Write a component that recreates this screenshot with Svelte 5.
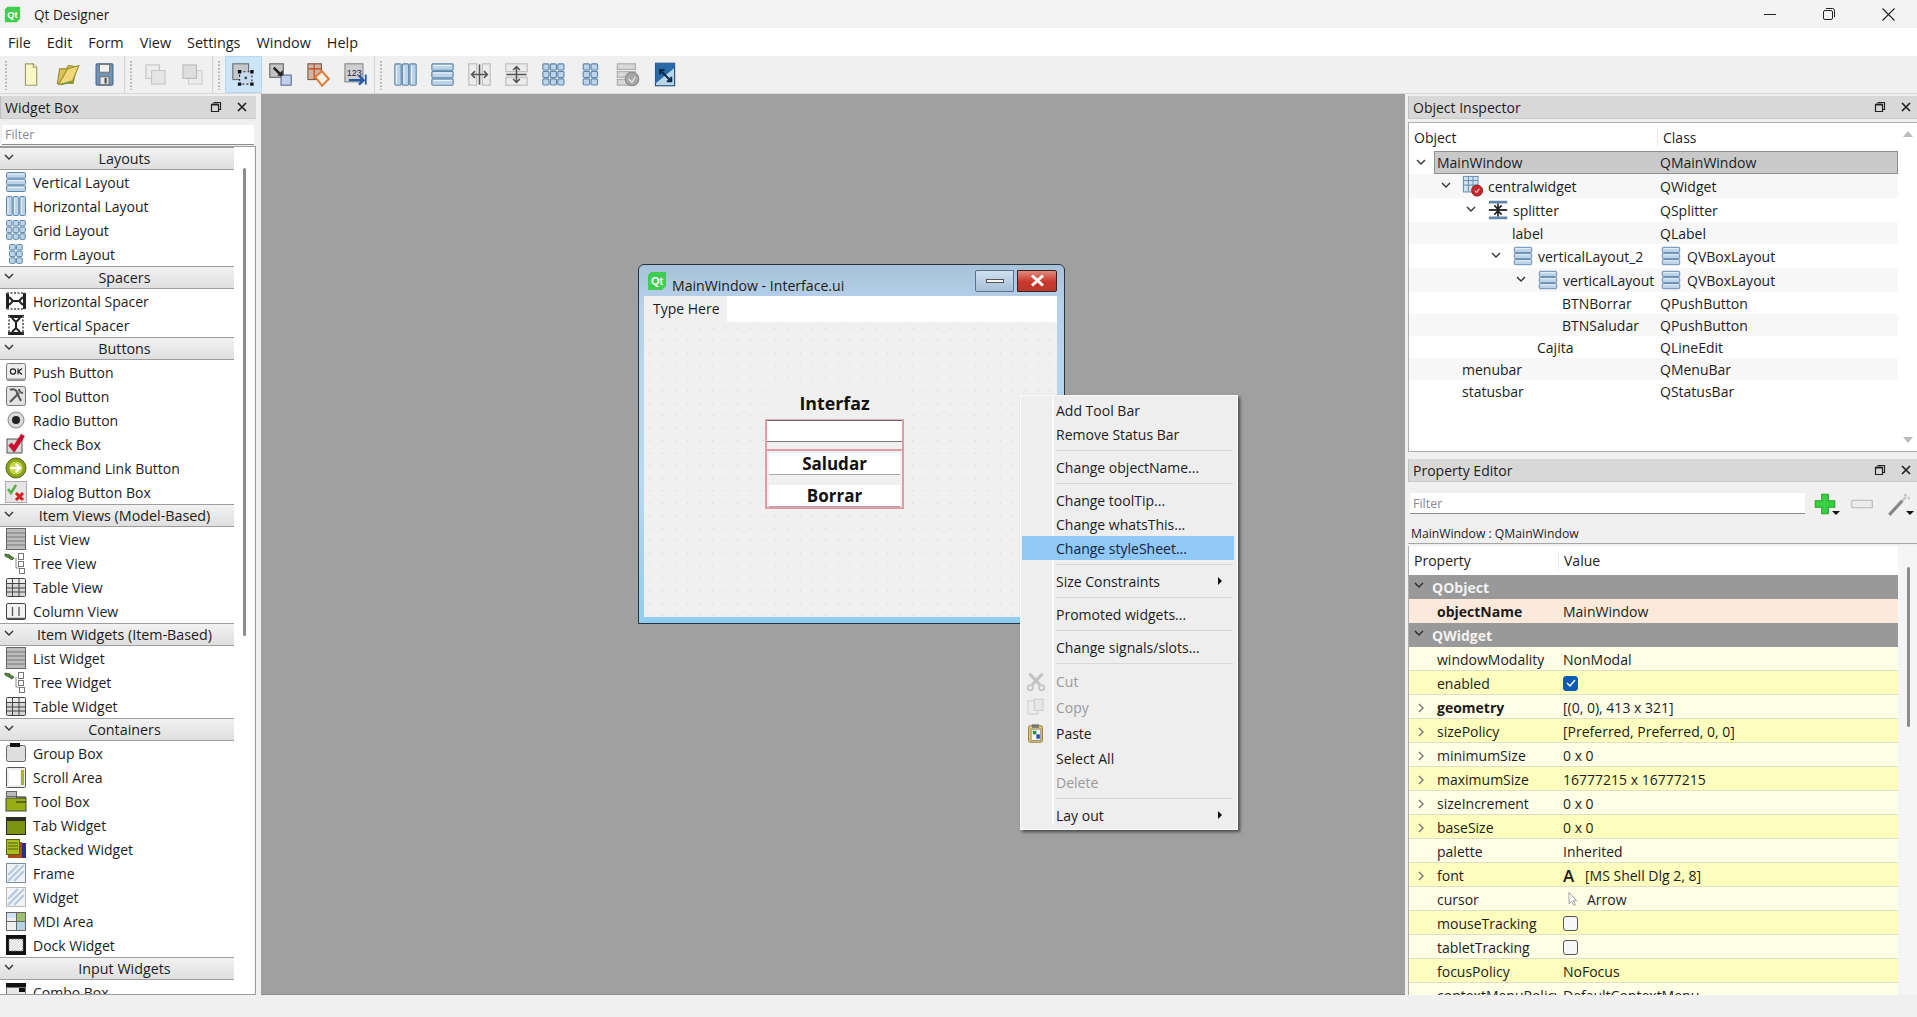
<script>
  const B = '#5f87ab', L = '#bcd3e8', D = '#2f5f8a';
  const cols = (n) => {
    let s = '';
    const w = 20 / n;
    for (let i = 0; i < n; i++) s += `<rect x="${2 + i * w + .5}" y="2.5" width="${w - 1}" height="19" rx="1" fill="${L}" stroke="${B}"/><path d="M${2 + i * w + 2} 4v16" stroke="#eef5fb" stroke-width=".9"/>`;
    return s;
  };
  const rows = (n) => {
    let s = '';
    const h = 20 / n;
    for (let i = 0; i < n; i++) s += `<rect x="2.5" y="${2 + i * h + .5}" width="19" height="${h - 1}" rx="1" fill="${L}" stroke="${B}"/><path d="M4 ${2 + i * h + 2}h16" stroke="#eef5fb" stroke-width=".9"/>`;
    return s;
  };
  const grid = (nx, ny, x0 = 2, w = 20) => {
    let s = '';
    const cw = w / nx, ch = 20 / ny;
    for (let i = 0; i < nx; i++) for (let j = 0; j < ny; j++) s += `<rect x="${x0 + i * cw + .5}" y="${2 + j * ch + .5}" width="${cw - 1.2}" height="${ch - 1.2}" rx="1" fill="${L}" stroke="${B}"/>`;
    return s;
  };
  const hatch = `<path d="M4 20 20 4M4 14 14 4M10 20 20 10" stroke="#b7c9dc" stroke-width="2.4"/>`;
  const icons = {
    vlayout: rows(3),
    hlayout: cols(3),
    glayout: grid(3, 3),
    flayout: grid(2, 3, 5, 14),
    hspacer: `<rect x="2" y="4" width="3" height="16" fill="#222"/><rect x="19" y="4" width="3" height="16" fill="#222"/><path d="M5 8l4 4-4 4M19 8l-4 4 4 4M9 12h6" stroke="#222" stroke-width="2" fill="none"/><path d="M3 4h18M3 20h18" stroke="#777" stroke-dasharray="2 1.5" stroke-width="2"/>`,
    vspacer: `<rect x="4" y="2" width="16" height="3" fill="#222"/><rect x="4" y="19" width="16" height="3" fill="#222"/><path d="M8 5l4 4 4-4M8 19l4-4 4 4M12 9v6" stroke="#222" stroke-width="2" fill="none"/><path d="M5 3v18M19 3v18" stroke="#777" stroke-dasharray="2 1.5" stroke-width="2"/>`,
    push: `<rect x="2.500" y="3.500" width="19" height="17" rx="2" fill="#eee" stroke="#777"/><path d="M3 19.500h18" stroke="#999" stroke-width="2"/><circle cx="9" cy="11.500" r="2.600" fill="none" stroke="#222" stroke-width="1.200"/><path d="M14 8.500v6M18 8.500l-3.600 3 3.600 3" stroke="#222" stroke-width="1.200" fill="none"/>`,
    tool: `<rect x="2.500" y="2.500" width="19" height="19" rx="2" fill="#e2e2e2" stroke="#777"/><path d="M6 18 15 9M15 5a4 4 0 0 0 4 4M6 6c3-2 7 0 7 3l4 8" stroke="#555" stroke-width="2" fill="none"/>`,
    radio: `<circle cx="12" cy="12" r="8" fill="#d9d9d9" stroke="#888"/><circle cx="12" cy="12" r="4" fill="#222"/>`,
    check: `<rect x="3" y="7" width="15" height="14" fill="#d8d8d8" stroke="#555"/><path d="M6 12l4 5 9-14" stroke="#c8102e" stroke-width="4.500" fill="none"/>`,
    cmd: `<circle cx="12" cy="12" r="10" fill="#8aa21f" stroke="#56660f"/><circle cx="12" cy="12" r="6.600" fill="#c8d64a"/><path d="M6.500 12h9M12 8l4 4-4 4" stroke="#fff" stroke-width="2.300" fill="none"/>`,
    dialog: `<rect x="1.500" y="1.500" width="21" height="21" fill="#e5e5e5" stroke="#aaa"/><path d="M4 9l3 4 5-8" stroke="#5fae4c" stroke-width="2.600" fill="none"/><path d="M12 13l7 7M19 13l-7 7" stroke="#d42020" stroke-width="3"/>`,
    list: `<rect x="2.500" y="1.500" width="19" height="21" fill="#bdbdbd" stroke="#666"/><path d="M3 6h18M3 10h18M3 14h18M3 18h18" stroke="#8e8e8e" stroke-width="1.400"/>`,
    tree: `<path d="M1 3l5 1-1 3-4-2zM6 5l4 2-2 2-3-2z" fill="#5b8a45" stroke="#3d6a2d"/><rect x="14.500" y="2.500" width="5" height="6" fill="#fff" stroke="#777"/><rect x="14.500" y="10.500" width="5" height="5" fill="#fff" stroke="#777"/><rect x="15.500" y="17.500" width="5" height="5" fill="#fff" stroke="#777"/><path d="M12 7v10h3" stroke="#888" fill="none"/>`,
    table: `<rect x="2.500" y="3.500" width="19" height="18" rx="1" fill="#d6d6d6" stroke="#444"/><rect x="3" y="4" width="18" height="4" fill="#eee"/><path d="M3 8.500h18M3 13h18M3 17h18M8.500 4v17M15 4v17" stroke="#444"/>`,
    column: `<rect x="2.500" y="4.500" width="19" height="16" rx="1.500" fill="#f3f3f3" stroke="#444"/><path d="M8.500 8v9M15 8v9M3 19.500h18" stroke="#555" stroke-width="1.300"/>`,
    group: `<rect x="2.500" y="4.500" width="19" height="16" rx="2" fill="#dedede" stroke="#666"/><rect x="6" y="2" width="10" height="4" fill="#111"/>`,
    scroll: `<rect x="2.500" y="2.500" width="19" height="20" rx="1" fill="#eee" stroke="#555"/><rect x="5" y="5" width="11" height="15" fill="#fff"/><rect x="17" y="5" width="3" height="15" fill="#a7b52a"/>`,
    toolbox: `<rect x="2" y="9" width="20" height="13" fill="#98ad12" stroke="#444"/><rect x="2.500" y="2.500" width="10" height="5" fill="#bbb" stroke="#666"/><path d="M12 8h10M12 13h10" stroke="#222" stroke-width="1.200"/>`,
    tab: `<rect x="2.500" y="6.500" width="19" height="15" fill="#7d9412" stroke="#222"/><rect x="2" y="4" width="20" height="4" fill="#2c2c2c"/>`,
    stacked: `<rect x="7" y="6" width="15" height="15" fill="#2b2f8a"/><rect x="4" y="5" width="14" height="16" fill="#b34a1c"/><rect x="2.500" y="2.500" width="13" height="15" fill="#a9bf20" stroke="#556010"/><path d="M4 6h10M4 9h10M4 12h10" stroke="#556010"/>`,
    frame: `<rect x="2.500" y="2.500" width="19" height="19" fill="#eef2f6" stroke="#7b8fa3"/>${hatch}`,
    widget: `<rect x="2.500" y="2.500" width="19" height="19" fill="#f2f5f8" stroke="#bbb"/>${hatch}`,
    mdi: `<rect x="2.500" y="3.500" width="19" height="18" fill="#f0f0f0" stroke="#666"/><rect x="3" y="4" width="9" height="5" fill="#cfe3f2"/><rect x="13" y="4" width="8" height="8" fill="#9fbf6e"/><rect x="13" y="13" width="8" height="8" fill="#b5d3e6"/><path d="M12.500 4v17M3 12.500h18" stroke="#666"/>`,
    dock: `<rect x="2" y="2" width="20" height="20" fill="#111"/><rect x="5" y="6" width="14" height="12" fill="#e8e8e8"/><path d="M5 6h14v12H5z" stroke="#777" stroke-dasharray="1.500 1.500" fill="none"/>`,
    combo: `<rect x="2" y="3" width="20" height="4" fill="#111"/><rect x="2.500" y="7.500" width="19" height="13" fill="#e8e8e8" stroke="#777"/><path d="M15 8h6v4h-6z" fill="#111"/>`,
    central: `<rect x="1.500" y="1.500" width="16" height="17" fill="#cfe0ef" stroke="#5f87ab"/><path d="M2 6h15M2 11h15M7 2v16M12 2v16" stroke="#5f87ab"/><circle cx="16.500" cy="17" r="6" fill="#c6282b" stroke="#8b1b1d"/><path d="M14 17l2 2 3-4" stroke="#ecc" stroke-width="1.200" fill="none"/>`,
    splitter: `<path d="M2 3.500h20M2 20.500h20" stroke="${B}" stroke-width="3"/><path d="M2 12h20" stroke="#222" stroke-width="2"/><path d="M12 5v5M8 7l4 4 4-4M12 19v-5M8 17l4-4 4 4" stroke="#222" stroke-width="1.800" fill="none"/>`,
    filenew: `<path d="M7.500 2.500h7l3 3v16h-10z" fill="#fbf8c8" stroke="#9d9a65"/><path d="M14.500 2.500v3h3" fill="#fff" stroke="#9d9a65"/>`,
    open: `<path d="M3 20l2-13h6l2-3 7 1-3 15z" fill="#d9c35a" stroke="#9a8a32"/><path d="M4 21l8-14 10-3-6 15z" fill="#efd97a" stroke="#a3912e"/><path d="M6 21l10-3" stroke="#6d9c4a" stroke-width="1.400"/>`,
    save: `<rect x="4.500" y="2.500" width="15" height="19" rx="1" fill="#6f94b8" stroke="#46688c"/><rect x="7.500" y="3" width="9" height="7" fill="#f2f2f2" stroke="#777"/><rect x="8" y="14" width="8" height="7" fill="#e8e8e8" stroke="#777"/><rect x="12" y="15" width="2" height="5" fill="#555"/>`,
    raise: `<rect x="3.500" y="3.500" width="12" height="12" fill="#ececec" stroke="#c6c6c6"/><rect x="8.500" y="8.500" width="12" height="12" fill="#e6e6e6" stroke="#c6c6c6"/>`,
    lower: `<rect x="8.500" y="8.500" width="12" height="12" fill="#ebebeb" stroke="#cecece"/><rect x="3.500" y="3.500" width="12" height="12" fill="#dedede" stroke="#bcbcbc"/>`,
    editw: `<rect x="2.500" y="2.500" width="14" height="14" fill="#c4c8ca" stroke="#6a7073"/><rect x="8.500" y="9.500" width="11" height="11" fill="#c9d9ee" stroke="#222" stroke-dasharray="1.600 2"/><circle cx="14" cy="15" r="1.300" fill="#356"/><path d="M7 8h3v3H7zM18 8h3v3h-3zM7 19h3v3H7zM18 19h3v3h-3z" fill="#111"/>`,
    signals: `<rect x="2.500" y="2.500" width="12" height="12" fill="#c4c4c4" stroke="#666"/><rect x="12.500" y="12.500" width="9" height="9" fill="#c2d0ea" stroke="#5b6e9c"/><path d="M6 6l7 7" stroke="#222" stroke-width="2.200"/><path d="M9 13h5v-5z" fill="#222"/>`,
    buddy: `<rect x="3.500" y="2.500" width="12" height="14" fill="#d0b4a4" stroke="#7c5a48"/><path d="M4 7h11M9 2v14" stroke="#c2410c"/><path d="M10 14l6-5 6 7-6 6z" fill="#fbeee2" stroke="#e07a35" stroke-width="1.800"/>`,
    taborder: `<rect x="3.500" y="2.500" width="16" height="16" fill="#cfcfcf" stroke="#888"/><text x="5" y="13" font-size="8" font-family="Liberation Sans" fill="#224">123</text><path d="M7 17h12M16 13l4 4-4 4" stroke="#2457a6" stroke-width="2" fill="none"/><path d="M22 12v9" stroke="#2457a6" stroke-width="1.600"/>`,
    hsplit: `<rect x="2.500" y="2.500" width="7" height="19" fill="#ececec" stroke="#bbb"/><rect x="14.500" y="2.500" width="7" height="19" fill="#ececec" stroke="#bbb"/><path d="M12 3v18" stroke="#555" stroke-width="1.400"/><path d="M5 12h14M8 9l-3 3 3 3M16 9l3 3-3 3" stroke="#555" stroke-width="1.400" fill="none"/>`,
    vsplit: `<rect x="2.500" y="2.500" width="19" height="7" fill="#ececec" stroke="#bbb"/><rect x="2.500" y="14.500" width="19" height="7" fill="#ececec" stroke="#bbb"/><path d="M3 12h18" stroke="#555" stroke-width="1.400"/><path d="M12 5v14M9 8l3-3 3 3M9 16l3 3 3-3" stroke="#555" stroke-width="1.400" fill="none"/>`,
    breakl: `<rect x="3" y="2.500" width="16" height="5" fill="#d8d8d8" stroke="#aaa"/><rect x="3" y="9.500" width="16" height="5" fill="#d8d8d8" stroke="#aaa"/><rect x="3" y="16.500" width="10" height="5" fill="#d8d8d8" stroke="#aaa"/><circle cx="16" cy="16" r="6" fill="#a8a8a8" stroke="#888"/><path d="M13 16l3 3 3-5" stroke="#eee" fill="none"/>`,
    adjust: `<rect x="4" y="2" width="17" height="20" fill="#b9d7ea" stroke="#264f78"/><path d="M4 2h17v4L4 20z" fill="#2a6aa8"/><path d="M8 8l10 10M14 18h4v-4M8 12V8h4" stroke="#0b2b4a" stroke-width="1.800" fill="none"/>`,
    cut: `<path d="M5 3l12 13M20 3L8 16" stroke="#c2c2c2" stroke-width="3.400"/><circle cx="6" cy="19" r="3" fill="none" stroke="#c4c4c4" stroke-width="2"/><circle cx="19" cy="19" r="3" fill="none" stroke="#c4c4c4" stroke-width="2"/>`,
    copy: `<rect x="3.500" y="4.500" width="11" height="15" fill="#ececec" stroke="#c8c8c8"/><rect x="10.500" y="2.500" width="10" height="13" fill="#e6e6e6" stroke="#c8c8c8"/>`,
    paste: `<rect x="4" y="3" width="16" height="19" rx="2" fill="#e2c46a" stroke="#8f7a30"/><rect x="8" y="1.500" width="8" height="4" fill="#777"/><rect x="7" y="7" width="11" height="13" fill="#f5f5f5" stroke="#888"/><rect x="9" y="9" width="4" height="4" fill="#2f8f3f"/><rect x="13" y="13" width="4" height="5" fill="#2452b8"/>`,
    add: `<path d="M9 3h6v6h6v6h-6v6H9v-6H3V9h6z" fill="#37d23f" stroke="#2b9a31"/>`,
    remove: `<rect x="2.500" y="8.500" width="19" height="7" rx="1" fill="#ececec" stroke="#b5b5b5"/>`,
    wrench: `<path d="M3 22 15 9" stroke="#888" stroke-width="3"/><path d="M15 9l3-3M17 3l2 2M20 6l2 1" stroke="#c2c2c2" stroke-width="2.200"/>`,
    cursor: `<path d="M6 2v17l4-3.500 3 6 2.500-1-3-6h5z" fill="#fff" stroke="#777"/>`,
  };
  const cats = [
    ['Layouts', [['Vertical Layout','vlayout'],['Horizontal Layout','hlayout'],['Grid Layout','glayout'],['Form Layout','flayout']]],
    ['Spacers', [['Horizontal Spacer','hspacer'],['Vertical Spacer','vspacer']]],
    ['Buttons', [['Push Button','push'],['Tool Button','tool'],['Radio Button','radio'],['Check Box','check'],['Command Link Button','cmd'],['Dialog Button Box','dialog']]],
    ['Item Views (Model-Based)', [['List View','list'],['Tree View','tree'],['Table View','table'],['Column View','column']]],
    ['Item Widgets (Item-Based)', [['List Widget','list'],['Tree Widget','tree'],['Table Widget','table']]],
    ['Containers', [['Group Box','group'],['Scroll Area','scroll'],['Tool Box','toolbox'],['Tab Widget','tab'],['Stacked Widget','stacked'],['Frame','frame'],['Widget','widget'],['MDI Area','mdi'],['Dock Widget','dock']]],
    ['Input Widgets', [['Combo Box','combo']]],
  ];
  const tools = [['filenew','open','save'],['raise','lower'],['editw','signals','buddy','taborder'],['hlayout','vlayout','hsplit','vsplit','glayout','flayout','breakl','adjust']];
  const menus = ['File','Edit','Form','View','Settings','Window','Help'];
  const objs = [
    {d:0,n:'MainWindow',c:'QMainWindow',open:true,sel:true,h:23},
    {d:1,n:'centralwidget',c:'QWidget',open:true,i:'central',h:24},
    {d:2,n:'splitter',c:'QSplitter',open:true,i:'splitter',h:24},
    {d:3,n:'label',c:'QLabel',h:22},
    {d:3,n:'verticalLayout_2',c:'QVBoxLayout',open:true,i:'vlayout',ci:'vlayout',h:24},
    {d:4,n:'verticalLayout',c:'QVBoxLayout',open:true,i:'vlayout',ci:'vlayout',h:24},
    {d:5,n:'BTNBorrar',c:'QPushButton',h:22},
    {d:5,n:'BTNSaludar',c:'QPushButton',h:22},
    {d:4,n:'Cajita',c:'QLineEdit',h:22},
    {d:1,n:'menubar',c:'QMenuBar',h:22},
    {d:1,n:'statusbar',c:'QStatusBar',h:22},
  ];
  const props = [
    {g:'QObject'},
    {n:'objectName',v:'MainWindow',b:true,name:true},
    {g:'QWidget'},
    {n:'windowModality',v:'NonModal'},
    {n:'enabled',chk:'on'},
    {n:'geometry',v:'[(0, 0), 413 x 321]',b:true,x:true},
    {n:'sizePolicy',v:'[Preferred, Preferred, 0, 0]',x:true},
    {n:'minimumSize',v:'0 x 0',x:true},
    {n:'maximumSize',v:'16777215 x 16777215',x:true},
    {n:'sizeIncrement',v:'0 x 0',x:true},
    {n:'baseSize',v:'0 x 0',x:true},
    {n:'palette',v:'Inherited'},
    {n:'font',v:'[MS Shell Dlg 2, 8]',x:true,font:true},
    {n:'cursor',v:'Arrow',cur:true},
    {n:'mouseTracking',chk:'off'},
    {n:'tabletTracking',chk:'off'},
    {n:'focusPolicy',v:'NoFocus'},
    {n:'contextMenuPolicy',v:'DefaultContextMenu'},
  ];
  let alt = 0;
  const propRows = props.map((p) => {
    if (p.g || p.name) return { ...p };
    alt++;
    return { ...p, even: alt % 2 === 0 };
  });
  const ctx = [
    {t:'Add Tool Bar'},{t:'Remove Status Bar'},{s:1},
    {t:'Change objectName...'},{s:1},
    {t:'Change toolTip...'},{t:'Change whatsThis...'},{t:'Change styleSheet...',hi:1},{s:1},
    {t:'Size Constraints',sub:1},{s:1},
    {t:'Promoted widgets...'},{s:1},
    {t:'Change signals/slots...'},{s:1},
    {t:'Cut',dis:1,i:'cut',tall:1},{t:'Copy',dis:1,i:'copy',tall:1},{t:'Paste',i:'paste',tall:1},
    {t:'Select All'},{t:'Delete',dis:1},{s:1},
    {t:'Lay out',sub:1},
  ];
</script>

{#snippet icon(name, size = 20)}
  <svg class="ico" width={size} height={size} viewBox="0 0 24 24">{@html icons[name]}</svg>
{/snippet}
{#snippet chev()}
  <svg class="chev" width="10" height="7" viewBox="0 0 10 7"><path d="M1 1l4 4 4-4" fill="none" stroke="#333" stroke-width="1.400"/></svg>
{/snippet}
{#snippet dockTitle(t)}
  <div class="dock-title">
    <span>{t}</span>
    <svg class="float" width="12" height="12" viewBox="0 0 12 12"><path d="M3.500 1.500h7v7h-2M1.500 3.500h7v7h-7z" fill="none" stroke="#222" stroke-width="1.200"/><path d="M1.500 3.500h7" stroke="#222" stroke-width="2"/></svg>
    <svg class="cls" width="10" height="10" viewBox="0 0 10 10"><path d="M1 1l8 8M9 1l-8 8" stroke="#222" stroke-width="1.700"/></svg>
  </div>
{/snippet}
{#snippet qt(size)}
  <svg width={size} height={size} viewBox="0 0 20 20"><path d="M4 1h15v14l-4 4H1V4z" fill="#41cd52"/><text x="10" y="14" font-size="11" font-family="Liberation Sans" fill="#fff" text-anchor="middle" font-weight="700">Qt</text></svg>
{/snippet}

<div class="app">
  <header class="titlebar">
    <span class="tb-logo">{@render qt(17)}</span>
    <span class="tb-text">Qt Designer</span>
    <span class="winbtns">
      <svg width="12" height="12" viewBox="0 0 12 12"><path d="M0 6.500h12" stroke="#222"/></svg>
      <svg width="12" height="12" viewBox="0 0 12 12"><rect x=".5" y="2.500" width="9" height="9" rx="1.500" fill="none" stroke="#222"/><path d="M3 .5h6.500a2 2 0 0 1 2 2V9" fill="none" stroke="#222"/></svg>
      <svg width="13" height="13" viewBox="0 0 13 13"><path d="M.5.5l12 12M12.500.5l-12 12" stroke="#222" stroke-width="1.100"/></svg>
    </span>
  </header>
  <nav class="menubar">
    {#each menus as m}<span class="mi">{m}</span>{/each}
  </nav>
  <div class="toolbar">
    {#each tools as g, gi}
      <div class="tgroup" class:first={gi === 0}>
        <span class="handle"></span>
        {#each g as t}
          <span class="tbtn" class:on={t === 'editw'}>{@render icon(t, 27)}</span>
        {/each}
      </div>
    {/each}
  </div>

  <main class="body">
    <aside class="left">
      {@render dockTitle('Widget Box')}
      <div class="filter-wrap"><div class="filter">Filter</div></div>
      <div class="wb">
        <div class="wb-list">
          {#each cats as [name, items]}
            <div class="cat">{@render chev()}<span>{name}</span></div>
            {#each items as [label, ic]}
              <div class="item">{@render icon(ic, 24)}<span>{label}</span></div>
            {/each}
          {/each}
        </div>
        <div class="wb-scroll"><span></span></div>
      </div>
    </aside>

    <section class="center">
      <div class="dwin">
        <div class="dwin-title">
          {@render qt(20)}
          <span class="dwin-text">MainWindow - Interface.ui</span>
          <span class="dwin-min"><i></i></span>
          <span class="dwin-close">
            <svg width="15" height="13" viewBox="0 0 15 13"><path d="M2 1.500l11 10M13 1.500l-11 10" stroke="#fff" stroke-width="3"/></svg>
          </span>
        </div>
        <div class="client">
          <div class="dmenu"><span>Type Here</span></div>
          <div class="form-area">
            <div class="iface">Interfaz</div>
            <div class="splitter">
              <div class="ledit"></div>
              <div class="vl">
                <div class="pbtn saludar">Saludar</div>
                <div class="pbtn borrar">Borrar</div>
              </div>
            </div>
          </div>
        </div>
      </div>

      <div class="ctx">
        <div class="gutter"></div>
        {#each ctx as c}
          {#if c.s}
            <div class="sep"></div>
          {:else}
            <div class="ci" class:hi={c.hi} class:dis={c.dis} class:tall={c.tall}>
              {#if c.i}<span class="ci-ico">{@render icon(c.i, 21)}</span>{/if}
              <span>{c.t}</span>
              {#if c.sub}<i class="arr"></i>{/if}
            </div>
          {/if}
        {/each}
      </div>
    </section>

    <aside class="right">
      {@render dockTitle('Object Inspector')}
      <div class="oi">
        <div class="oi-main">
          <div class="oi-head"><span class="h1">Object</span><span class="h2">Class</span></div>
          {#each objs as o, i}
            <div class="orow" class:alt={i % 2 === 1} style="height:{o.h}px">
              <span class="slot" style="width:{25 + o.d * 25}px">{#if o.open}{@render chev()}{/if}</span>
              <span class="rest" class:sel={o.sel}>
                <span class="oname" style="width:{223 - o.d * 25}px">
                  {#if o.i}<span class="oico">{@render icon(o.i, 22)}</span>{/if}{o.n}
                </span>
                <span class="ocls">{#if o.ci}<span class="oico cico">{@render icon(o.ci, 22)}</span>{/if}{o.c}</span>
              </span>
            </div>
          {/each}
        </div>
        <div class="oi-scroll"><i class="up"></i><i class="down"></i></div>
      </div>

      {@render dockTitle('Property Editor')}
      <div class="pe-tools">
        <div class="filter pe-filter">Filter</div>
        <span class="pt">{@render icon('add', 26)}<i class="drop"></i></span>
        <span class="pt">{@render icon('remove', 26)}</span>
        <span class="pt">{@render icon('wrench', 26)}<i class="drop"></i></span>
      </div>
      <div class="pe-label">MainWindow : QMainWindow</div>
      <div class="pe">
        <div class="pe-main">
          <div class="pe-head"><span class="pc1">Property</span><span class="pc2">Value</span></div>
          {#each propRows as p}
            {#if p.g}
              <div class="pgroup">{@render chev()}<span>{p.g}</span></div>
            {:else}
              <div class="prow" class:nm={p.name} class:even={p.even}>
                <span class="pn" class:bold={p.b}>
                  {#if p.x}<svg class="exp" width="7" height="10" viewBox="0 0 7 10"><path d="M1 1l4 4-4 4" fill="none" stroke="#777" stroke-width="1.400"/></svg>{/if}{p.n}
                </span>
                <span class="pv">
                  {#if p.chk}
                    <span class="cb" class:on={p.chk === 'on'}>
                      {#if p.chk === 'on'}<svg width="12" height="10" viewBox="0 0 12 10"><path d="M2 5l3 3 5-6" fill="none" stroke="#fff" stroke-width="1.400"/></svg>{/if}
                    </span>
                  {:else if p.font}
                    <b class="fa">A</b>{p.v}
                  {:else if p.cur}
                    <span class="curi">{@render icon('cursor', 16)}</span>{p.v}
                  {:else}
                    {p.v}
                  {/if}
                </span>
              </div>
            {/if}
          {/each}
        </div>
        <div class="pe-scroll"><span></span></div>
      </div>
    </aside>
  </main>
  <footer class="status"></footer>
</div>

<style>
  :global(body) { margin: 0; background: #f0f0f0; overflow: hidden; }
  .app {
    width: 1917px; height: 1017px; display: flex; flex-direction: column; overflow: hidden;
    font-family: "Open Sans", "Noto Sans", sans-serif; font-size: 14px; color: #1c1c1c; background: #f0f0f0;
  }
  .ico { display: block; flex: none; }

  .titlebar { height: 28px; flex: none; background: #f3f3f3; display: flex; align-items: center; }
  .tb-logo { margin-left: 4px; width: 30px; display: flex; }
  .tb-text { font-size: 13.600px; }
  .winbtns { margin-left: auto; display: flex; align-items: center; gap: 47px; padding-right: 22px; }
  .winbtns svg { display: block; }

  .menubar { height: 28px; flex: none; background: #fff; display: flex; align-items: center; padding-left: 8px; font-size: 14.400px; }
  .mi { margin-right: 16px; }

  .toolbar { height: 38px; flex: none; background: #f0f0f0; display: flex; border-bottom: 1px solid #dadada; box-sizing: border-box; }
  .tgroup { display: flex; align-items: center; border-left: 1px solid #d4d4d4; padding-right: 1px; }
  .tgroup.first { border-left: 0; }
  .handle { width: 12px; height: 30px; display: block; background: radial-gradient(circle, #b5b5b5 .8px, transparent 1px) 5px 0 / 2px 3.500px repeat-y; flex: none; }
  .tbtn { width: 37px; height: 37px; display: flex; align-items: center; justify-content: center; box-sizing: border-box; flex: none; }
  .tbtn.on { background: #cde6f7; outline: 1px solid #b6d9f2; outline-offset: -1px; }

  .body { flex: 1; min-height: 0; display: flex; }
  .left { width: 256px; flex: none; display: flex; flex-direction: column; padding-top: 2px; box-sizing: border-box; }
  .dock-title {
    height: 23px; flex: none; background: #d8d8d8; display: flex; align-items: center; padding: 0 7px 0 4px;
    border-bottom: 1px solid #c8c8c8; box-sizing: border-box; border-left: 1px solid #c0c0c0;
  }
  .right .dock-title { padding-right: 4px; }
  .dock-title span { flex: 1; }
  .float { margin-right: 15px; }
  .cls { margin-right: 2px; }
  .filter-wrap { height: 21px; padding: 6px 2px 0; flex: none; }
  .filter {
    height: 20px; background: #fff; border-bottom: 1px solid #8c8c8c; color: #8a8a8a; font-size: 12.500px;
    padding-left: 3px; line-height: 20px; box-sizing: border-box; border-radius: 2px 2px 0 0;
  }
  .wb { flex: 1; min-height: 0; display: flex; border: 1px solid #9c9c9c; border-left: 0; background: #f5f5f5; overflow: hidden; }
  .wb-list { width: 234px; flex: none; background: #fff; }
  .wb-scroll { width: 20px; flex: none; background: #fff; padding: 21px 0 0 9px; box-sizing: border-box; }
  .wb-scroll span { display: block; width: 3px; height: 468px; background: #8c8c8c; border-radius: 2px; }
  .cat {
    height: 23px; box-sizing: border-box; display: flex; align-items: center; position: relative; padding-left: 15px;
    background: linear-gradient(#f2f2f2, #dfdfdf); border-top: 1px solid #9e9e9e; border-bottom: 1px solid #9e9e9e;
    font-size: 14.300px;
  }
  .cat span { flex: 1; text-align: center; line-height: 20px; }
  .cat .chev { position: absolute; left: 4px; top: 6px; }
  .item { height: 24px; display: flex; align-items: center; padding-left: 4px; gap: 5px; background: #fff; }

  .center { flex: 1; min-width: 0; margin-left: 5px; margin-right: 3px; background: #a0a0a0; position: relative; overflow: hidden; border-bottom: 1px solid #8e8e8e; }
  .dwin {
    position: absolute; left: 377px; top: 170px; width: 427px; height: 360px; box-sizing: border-box;
    border: 1px solid #26323e; border-radius: 6px 6px 0 0; padding: 0 7px 6px 5px; display: flex; flex-direction: column;
    background: linear-gradient(#a8c2da, #b7d2ea 12%, #b5daf5 60%, #8ecdf2);
  }
  .dwin-title { height: 31px; flex: none; display: flex; align-items: center; padding: 0 0 0 3px; }
  .dwin-title :global(svg:first-child) { flex: none; }
  .dwin-text { margin-left: 5px; font-size: 14.100px; padding-top: 9px; flex: 1; }
  .dwin-min { width: 39px; height: 22px; border: 1px solid #59738f; background: linear-gradient(#cfe0ef, #a6bfd7); display: flex; align-items: center; justify-content: center; box-sizing: border-box; margin-right: 3px; border-radius: 2px 0 0 2px; }
  .dwin-min i { display: block; width: 18px; height: 4px; background: #f6f6f6; border: 1px solid #555; box-sizing: border-box; }
  .dwin-close { width: 40px; height: 22px; border: 1px solid #3d1f1f; background: linear-gradient(#e28b7c, #c9372a 55%, #b93a2d); display: flex; align-items: center; justify-content: center; box-sizing: border-box; border-radius: 0 2px 2px 0; }
  .client { flex: 1; display: flex; flex-direction: column; background: #f0f0f0; min-height: 0; }
  .dmenu { height: 26px; background: #fff; flex: none; display: flex; }
  .dmenu span { width: 83px; padding-left: 9px; box-sizing: border-box; background: #f0f0f0; line-height: 26px; }
  .form-area {
    flex: 1; padding: 68px 0 0 121px;
    background-color: #f0f0f0;
    background-image: radial-gradient(circle, #d2d2d2 .7px, transparent 1px);
    background-size: 12.500px 12.500px;
  }
  .iface { width: 139px; height: 29px; text-align: center; font-weight: 700; font-size: 17.800px; line-height: 27px; color: #111; background: #f0f0f0; }
  .splitter { width: 139px; height: 90px; box-sizing: border-box; border: 2px solid #df9da3; border-top: 1px solid #e6b4b8; background: #f0f0f0; }
  .ledit { height: 22px; background: #fff; border-top: 1px solid #666; border-bottom: 1px solid #777; box-sizing: border-box; margin-bottom: 7px; }
  .vl { border-top: 2px solid #df9da3; padding: 2px 2px 0; display: flex; flex-direction: column; gap: 10px; }
  .pbtn { height: 22px; background: #fff; text-align: center; font-weight: 700; font-size: 17px; line-height: 21px; color: #111; border-bottom: 1px solid #aaa; box-sizing: border-box; }

  .ctx {
    position: absolute; left: 759px; top: 301px; width: 218px; height: 435px; box-sizing: border-box;
    background: #eeeeee; border: 1px solid #fbfbfb; padding: 2px 3px 0 1px; box-shadow: 2px 2px 3px rgba(0,0,0,.55); z-index: 2;
  }
  .gutter { position: absolute; left: 31px; top: 2px; bottom: 4px; width: 2px; background: #fafafa; }
  .ci { height: 24px; display: flex; align-items: center; padding-left: 34px; position: relative; }
  .ci.tall { height: 26px; }
  .ci.hi { background: #90c8f6; color: #14243a; }
  .ci.dis { color: #9a9a9a; }
  .ci-ico { position: absolute; left: 3px; top: 3px; }
  .arr { position: absolute; right: 12px; top: 8px; border-left: 4px solid #111; border-top: 4px solid transparent; border-bottom: 4px solid transparent; }
  .sep { height: 9px; margin-left: 34px; margin-right: 1px; background: linear-gradient(#d8d8d8, #d8d8d8) 0 4px / 100% 1px no-repeat; }

  .right { width: 509px; flex: none; display: flex; flex-direction: column; padding-top: 2px; box-sizing: border-box; }
  .oi { height: 330px; flex: none; margin: 3px 0 7px; border: 1px solid #aeaeae; border-width: 1px 0 1px 1px; background: #fff; display: flex; box-sizing: border-box; }
  .oi-main { width: 489px; flex: none; padding-top: 1px; }
  .oi-head { height: 27px; display: flex; align-items: center; }
  .h1 { width: 249px; padding-left: 5px; box-sizing: border-box; border-right: 1px solid #e6e6e6; }
  .h2 { padding-left: 5px; }
  .orow { display: flex; align-items: stretch; box-sizing: border-box; }
  .orow.alt { background: #f7f7f7; }
  .slot { flex: none; position: relative; display: block; }
  .slot .chev { position: absolute; right: 8px; top: 8px; }
  .rest { flex: 1; display: flex; align-items: center; padding-left: 3px; box-sizing: border-box; min-width: 0; }
  .rest.sel { background: #c9c9c9; border: 1px solid #8f8f8f; padding-left: 2px; }
  .oname { display: flex; align-items: center; flex: none; white-space: nowrap; }
  .oico { width: 26px; flex: none; display: block; }
  .oico.cico { width: 27px; }
  .ocls { display: flex; align-items: center; }
  .oi-scroll { flex: 1; position: relative; }
  .up, .down { position: absolute; left: 5px; width: 0; height: 0; border-left: 5px solid transparent; border-right: 5px solid transparent; }
  .up { top: 8px; border-bottom: 6px solid #bcbcbc; }
  .down { bottom: 8px; border-top: 6px solid #bcbcbc; }

  .pe-tools { height: 32px; flex: none; display: flex; align-items: flex-end; padding: 0 0 0 2px; }
  .pe-filter { width: 395px; flex: none; height: 21px; line-height: 21px; }
  .pt { width: 37px; height: 26px; display: flex; justify-content: center; align-items: flex-start; position: relative; margin-bottom: -3px; }
  .pt:nth-child(2) { margin-left: 1px; }
  .drop { position: absolute; right: 3px; bottom: 2px; border-left: 4px solid transparent; border-right: 4px solid transparent; border-top: 4px solid #111; }
  .pe-label { height: 30px; flex: none; box-sizing: border-box; border-bottom: 1px solid #a6a6a6; padding: 10px 0 0 3px; font-size: 12.200px; line-height: 19px; }
  .pe { flex: 1; min-height: 0; margin-top: 2px; display: flex; background: #fff; border-left: 1px solid #aeaeae; overflow: hidden; }
  .pe-main { width: 489px; flex: none; }
  .pe-head { height: 29px; display: flex; align-items: center; background: #fff; }
  .pc1 { width: 150px; padding-left: 5px; box-sizing: border-box; border-right: 1px solid #eee; }
  .pc2 { padding-left: 5px; }
  .pgroup { height: 24px; background: #999; color: #f2f2f2; font-weight: 700; display: flex; align-items: center; position: relative; padding-left: 23px; }
  .pgroup .chev { position: absolute; left: 5px; top: 7px; }
  .pgroup .chev :global(path) { stroke: #2c2c2c; }
  .prow { height: 24px; display: flex; align-items: center; background: #ffffe6; border-bottom: 1px solid #dfdfc8; box-sizing: border-box; padding-top: 1px; }
  .prow.even { background: #fdfdbd; }
  .prow.nm { background: #fbeadb; border-bottom-color: #fbeadb; }
  .pn { width: 150px; flex: none; padding-left: 28px; box-sizing: border-box; position: relative; white-space: nowrap; overflow: hidden; }
  .pn.bold { font-weight: 700; }
  .exp { position: absolute; left: 9px; top: 5px; }
  .pv { padding-left: 4px; display: flex; align-items: center; white-space: pre; }
  .cb { width: 15px; height: 15px; border-radius: 3px; box-sizing: border-box; border: 1px solid #555; background: #f7f7f7; display: flex; align-items: center; justify-content: center; }
  .cb.on { background: #0a5cb5; border-color: #0a5cb5; }
  .fa { font-size: 17px; width: 22px; font-weight: 600; }
  .curi { width: 24px; display: block; padding-left: 2px; box-sizing: border-box; }
  .pe-scroll { flex: 1; padding: 21px 0 0 9px; box-sizing: border-box; background: #f5f5f5; }
  .pe-scroll span { display: block; width: 3px; height: 160px; background: #8c8c8c; border-radius: 2px; }
  .status { height: 22px; flex: none; background: #f0f0f0; }
</style>
